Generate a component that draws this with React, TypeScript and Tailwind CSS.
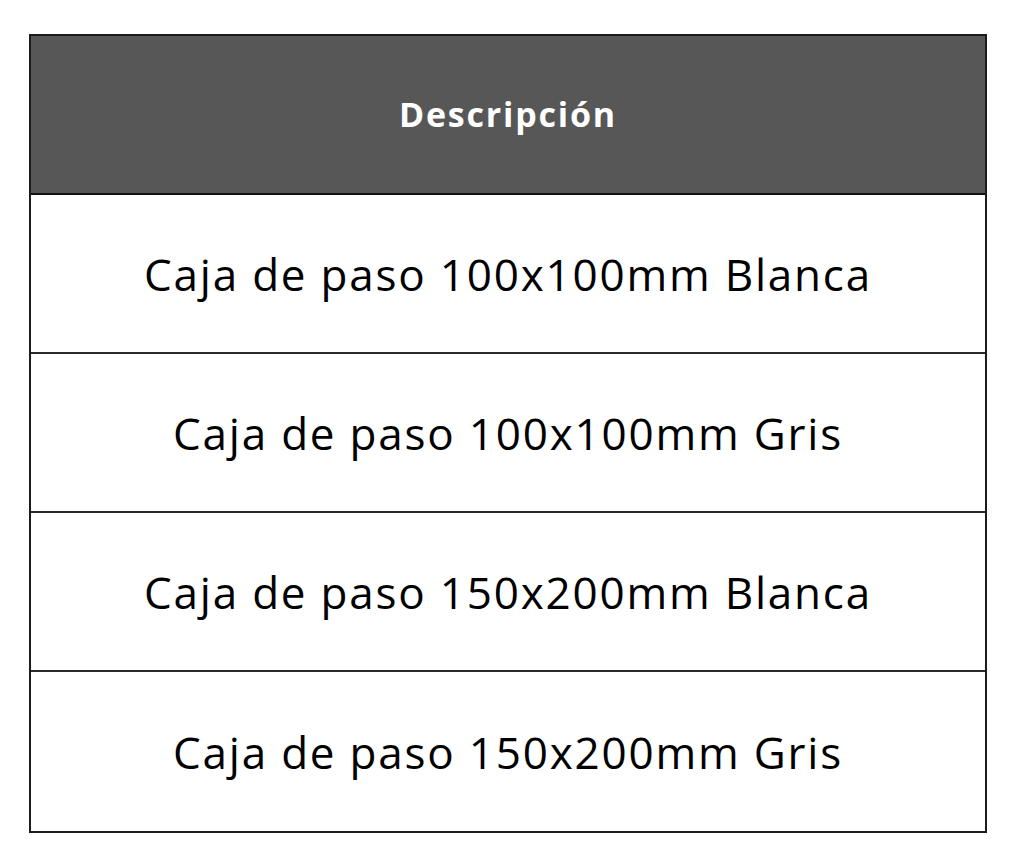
const rows = [
  "Caja de paso 100x100mm Blanca",
  "Caja de paso 100x100mm Gris",
  "Caja de paso 150x200mm Blanca",
  "Caja de paso 150x200mm Gris",
];

export default function App() {
  return (
    <div className="min-h-[858px] w-[1015px] bg-white pl-[29px] pt-[34px]" style={{ fontFamily: '"Open Sans", "Noto Sans", sans-serif' }}>
      <div className="flex w-[958px] flex-col border-2 border-[#1c1c1c]">
        <div className="flex h-[159px] items-center justify-center border-b-2 border-[#111] bg-[#575757]">
          <span className="text-[34px] font-bold tracking-[1.8px] text-white">Descripción</span>
        </div>
        {rows.map((r, i) => (
          <div
            key={r}
            className={`flex h-[159px] items-center justify-center ${i < rows.length - 1 ? "border-b-2 border-[#2a2a2a]" : ""}`}
          >
            <span className="text-[44px] tracking-[1.8px] text-black">{r}</span>
          </div>
        ))}
      </div>
    </div>
  );
}
